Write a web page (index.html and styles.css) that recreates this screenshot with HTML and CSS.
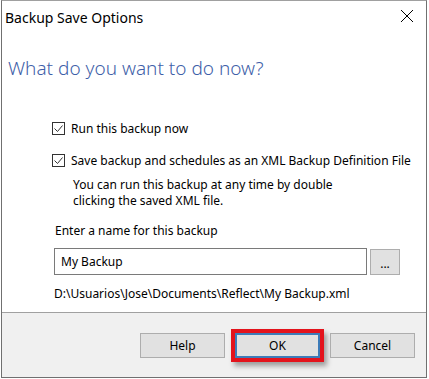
FILE: index.html
```html
<!DOCTYPE html>
<html lang="en">

<head>
    <meta charset="UTF-8" />
    <title>Backup Save Options</title>
    <link rel="stylesheet" href="styles.css">
</head>

<body>
    <div class="window">
        <div class="titlebar">
            <span class="title">Backup Save Options</span>
            <svg class="close" width="14" height="14" viewBox="0 0 14 14">
                <path d="M1 1 L13 13 M13 1 L1 13" stroke="#000" stroke-width="1" fill="none" />
            </svg>
        </div>

        <div class="content">
            <h1 class="heading">What do you want to do now?</h1>

            <div class="options">
                <label class="check_row">
                    <span class="box">
                        <svg width="11" height="11" viewBox="0 0 11 11">
                            <path d="M1.5 5.5 L4.5 8.5 L9.5 2.5" stroke="#333" stroke-width="1" fill="none" />
                        </svg>
                    </span>
                    Run this backup now
                </label>

                <label class="check_row second">
                    <span class="box">
                        <svg width="11" height="11" viewBox="0 0 11 11">
                            <path d="M1.5 5.5 L4.5 8.5 L9.5 2.5" stroke="#333" stroke-width="1" fill="none" />
                        </svg>
                    </span>
                    Save backup and schedules as an XML Backup Definition File
                </label>

                <p class="desc">You can run this backup at any time by double<br>clicking the saved XML file.</p>

                <div class="name_label">Enter a name for this backup</div>
                <div class="name_row">
                    <div class="name_input">My Backup</div>
                    <button class="browse">...</button>
                </div>
                <div class="path">D:\Usuarios\Jose\Documents\Reflect\My Backup.xml</div>
            </div>
        </div>

        <div class="footer">
            <button class="btn">Help</button>
            <button class="btn ok">OK</button>
            <button class="btn">Cancel</button>
        </div>
    </div>
</body>

</html>
```

FILE: styles.css
```css
* {
    box-sizing: border-box;
    font-family: 'Noto Sans', 'Open Sans', sans-serif;
}

body {
    margin: 0;
    padding: 0;
    background-color: #fff;
    width: 429px;
    height: 379px;
    overflow: hidden;
}

.window {
    width: 426px;
    height: 378px;
    margin-left: 1px;
    border: 1px solid #707070;
    border-top-color: #a0a0a0;
    display: flex;
    flex-direction: column;
    background-color: #fff;
}

.titlebar {
    height: 32px;
    display: flex;
    align-items: center;
    justify-content: space-between;
    padding-left: 3px;
    padding-right: 12px;
}

.title {
    font-size: 14px;
    color: #000;
}

.close {
    margin-top: -2px;
}

.content {
    flex-grow: 1;
}

.heading {
    margin: 0;
    margin-top: 23px;
    padding-left: 6px;
    font-size: 19px;
    font-weight: 300;
    line-height: 24px;
    color: #3f5fa9;
}

.options {
    padding-left: 50px;
    font-size: 12px;
    color: #000;
}

.check_row {
    display: flex;
    align-items: center;
    gap: 6px;
    height: 16px;
    margin-top: 40px;
    white-space: nowrap;
}

.check_row.second {
    margin-top: 16px;
}

.box {
    width: 13px;
    height: 13px;
    border: 1px solid #333;
    display: flex;
    align-items: center;
    justify-content: center;
    background-color: #fff;
    flex-shrink: 0;
}

.desc {
    margin: 9px 0 0 21px;
    line-height: 16px;
}

.name_label {
    margin-top: 14px;
    padding-left: 3px;
    line-height: 16px;
}

.name_row {
    display: flex;
    align-items: flex-start;
    gap: 3px;
    margin-top: 9px;
    padding-left: 2px;
}

.name_input {
    width: 313px;
    height: 27px;
    border: 1px solid #7a7a7a;
    padding: 4px 6px;
    font-size: 12px;
    line-height: 17px;
}

.browse {
    width: 30px;
    height: 26px;
    margin-top: 1px;
    padding: 0;
    border: 1px solid #adadad;
    background-color: #e1e1e1;
    font-size: 12px;
    line-height: 16px;
    padding-top: 4px;
    color: #000;
}

.path {
    margin-top: 11px;
    padding-left: 2px;
    line-height: 16px;
}

.footer {
    height: 65px;
    border-top: 1px solid #a0a0a0;
    background-color: #f0f0f0;
    display: flex;
    justify-content: flex-end;
    align-items: flex-start;
    gap: 10px;
    padding-top: 20px;
    padding-right: 11px;
}

.btn {
    width: 85px;
    height: 25px;
    border: 1px solid #adadad;
    background-color: #e1e1e1;
    font-size: 12px;
    color: #000;
    padding: 0;
}

.ok {
    border: 2px solid #3c7bb8;
    box-shadow: 0 0 0 4px #e3131c, 3px 4px 5px 4px rgba(0, 0, 0, 0.35);
}
```
